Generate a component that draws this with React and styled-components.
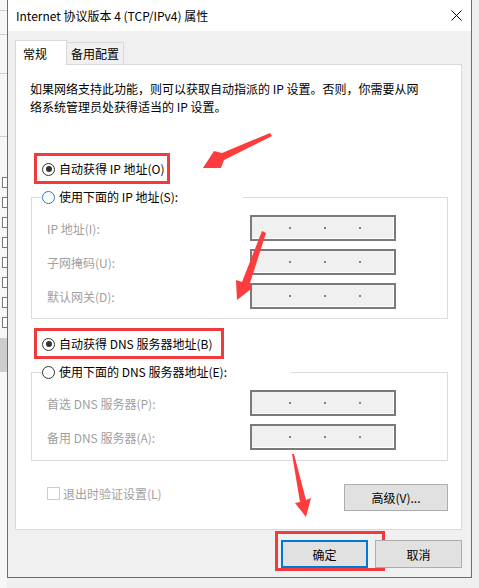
import React from 'react'
import styled, { createGlobalStyle } from 'styled-components'

const GlobalStyle = createGlobalStyle`
    html, body {
        margin: 0;
        padding: 0;
        background: #f0f0f0;
    }
    body {
        font-family: "Noto Sans CJK SC", "Noto Sans", sans-serif;
        font-size: 12px;
        color: #000;
    }
`

const Screen = styled.div`
    position: relative;
    width: 479px;
    height: 588px;
    overflow: hidden;
    display: flex;
    align-items: flex-start;
    background: #efefef;
`

const LeftStrip = styled.div`
    width: 7px;
    height: 588px;
    background: #f7f7f7;
    display: flex;
    flex-direction: column;
    align-items: flex-end;
    .line {
        width: 7px;
        height: 1px;
        background: #d0d0d0;
    }
    .tick {
        width: 4px;
        height: 9px;
        border: 1px solid #777;
        border-right: none;
        background: #fff;
        margin-top: 9px;
    }
    .block {
        width: 7px;
        height: 34px;
        background: #cdcdcd;
        margin-top: 10px;
    }
`

const Dialog = styled.div`
    width: 465px;
    box-sizing: border-box;
    border: 1px solid #1883d7;
    border-top: none;
    background: #f0f0f0;
    display: flex;
    flex-direction: column;
`

const TitleBar = styled.div`
    height: 31px;
    background: #fff;
    display: flex;
    align-items: center;
    justify-content: space-between;
    padding: 0 9px 0 8px;
    font-size: 12px;
`

const Body = styled.div`
    padding: 9px 9px 9px 7px;
    display: flex;
    flex-direction: column;
`

const TabBar = styled.div`
    display: flex;
    align-items: flex-end;
    margin-bottom: -1px;
    position: relative;
    z-index: 1;
`

const Tab = styled.div`
    box-sizing: border-box;
    display: flex;
    align-items: center;
    border: 1px solid #d9d9d9;
    border-bottom: none;
    height: ${p => (p.$active ? '25px' : '22px')};
    width: ${p => p.$w}px;
    padding-left: ${p => (p.$active ? '7px' : '4px')};
    margin-bottom: ${p => (p.$active ? '0' : '1px')};
    background: ${p => (p.$active ? '#fff' : '#f0f0f0')};
    border-left: ${p => (p.$active ? '1px solid #d9d9d9' : 'none')};
`

const Panel = styled.div`
    background: #fff;
    border: 1px solid #d9d9d9;
    padding: 0 13px 18px 0;
    display: flex;
    flex-direction: column;
`

const Desc = styled.p`
    margin: 15px 0 0 14px;
    line-height: 18px;
`

const RadioRow = styled.label`
    position: relative;
    display: inline-flex;
    align-items: center;
    gap: 4px;
    height: 18px;
    line-height: 18px;
    margin: ${p => p.$mt || 0}px 0 0 26px;
    align-self: flex-start;
    &::after {
        content: '';
        display: ${p => (p.$marked ? 'block' : 'none')};
        position: absolute;
        left: -8px;
        right: -${p => p.$markRight || 5}px;
        top: -7px;
        bottom: -6px;
        border: 3px solid #f13a3c;
    }
`

const Circle = styled.span`
    box-sizing: border-box;
    width: 13px;
    height: 13px;
    border-radius: 50%;
    border: 1px solid ${p => (p.$focus ? '#1a7fd4' : '#333')};
    background: #fff;
    display: flex;
    align-items: center;
    justify-content: center;
    &::before {
        content: '';
        display: ${p => (p.$checked ? 'block' : 'none')};
        width: 6px;
        height: 6px;
        border-radius: 50%;
        background: #333;
    }
`

const Group = styled.fieldset`
    margin: 10px 0 0 15px;
    padding: 9px 0 ${p => p.$pb || 9}px 0;
    border: 1px solid #dcdcdc;
    min-width: 0;
    display: grid;
    grid-template-columns: 218px 146px;
    row-gap: 8px;
    align-items: center;
`

const Legend = styled.legend`
    margin-left: 10px;
    padding: 0;
    width: ${p => p.$w}px;
    height: 18px;
`

const FieldLabel = styled.span`
    color: #a0a0a0;
    padding-left: 15px;
`

const IpBox = styled.div`
    box-sizing: border-box;
    height: 26px;
    border: 2px solid #7a7a7a;
    box-shadow: inset -1px -1px 0 #fff;
    background: #f0f0f0;
    display: flex;
    align-items: center;
    padding-left: 4px;
    span {
        width: 33px;
    }
    i {
        width: 2px;
        height: 2px;
        background: #7b7f9a;
    }
`

const Footer = styled.div`
    display: flex;
    justify-content: space-between;
    align-items: flex-start;
    margin: 23px 0 0 31px;
`

const CheckRow = styled.label`
    display: flex;
    align-items: center;
    gap: 3px;
    height: 18px;
    color: #a0a0a0;
`

const Box = styled.span`
    box-sizing: border-box;
    width: 13px;
    height: 13px;
    border: 1px solid #cccccc;
    background: #fff;
`

const Button = styled.button`
    box-sizing: border-box;
    font: inherit;
    color: #000;
    width: ${p => p.$w}px;
    height: ${p => p.$h}px;
    background: #e1e1e1;
    border: ${p => (p.$default ? '2px solid #0078d7' : '1px solid #adadad')};
    padding: 0;
    display: flex;
    align-items: center;
    justify-content: center;
    position: relative;
`

const Actions = styled.div`
    display: flex;
    justify-content: flex-end;
    gap: 7px;
    margin-top: 10px;
`

const Marked = styled.div`
    position: relative;
    &::after {
        content: '';
        position: absolute;
        left: -6px;
        right: -17px;
        top: -9px;
        bottom: -3px;
        border: 3px solid #f13a3c;
    }
`

const Arrows = styled.svg`
    position: absolute;
    left: 0;
    top: 0;
    pointer-events: none;
`

const Ip = () => (
    <IpBox>
        <span /><i /><span /><i /><span /><i />
    </IpBox>
)

export default function App() {
    return (
        <Screen>
            <GlobalStyle />
            <LeftStrip>
                <div className="line" style={{ marginTop: 10 }} />
                <div className="line" style={{ marginTop: 23 }} />
                <div className="line" style={{ marginTop: 38 }} />
                <div className="line" style={{ marginTop: 62 }} />
                <div style={{ height: 31 }} />
                {[0, 1, 2, 3, 4, 5, 6, 7].map(n => <div key={n} className="tick" />)}
                <div className="block" />
            </LeftStrip>
            <Dialog>
                <TitleBar>
                    <span>Internet 协议版本 4 (TCP/IPv4) 属性</span>
                    <svg width="11" height="11" viewBox="0 0 11 11">
                        <path d="M0.5 0.5 L10.5 10.5 M10.5 0.5 L0.5 10.5" stroke="#000" strokeWidth="1" />
                    </svg>
                </TitleBar>
                <Body>
                    <TabBar>
                        <Tab $active $w={52}>常规</Tab>
                        <Tab $w={57}>备用配置</Tab>
                    </TabBar>
                    <Panel>
                        <Desc>
                            如果网络支持此功能，则可以获取自动指派的 IP 设置。否则，你需要从网<br />
                            络系统管理员处获得适当的 IP 设置。
                        </Desc>
                        <RadioRow $mt={44} $marked $markRight={5}>
                            <Circle $checked />自动获得 IP 地址(O)
                        </RadioRow>
                        <Group>
                            <Legend $w={201}>
                                <RadioRow style={{ margin: 0 }}>
                                    <Circle $focus />使用下面的 IP 地址(S):
                                </RadioRow>
                            </Legend>
                            <FieldLabel>IP 地址(I):</FieldLabel>
                            <Ip />
                            <FieldLabel>子网掩码(U):</FieldLabel>
                            <Ip />
                            <FieldLabel>默认网关(D):</FieldLabel>
                            <Ip />
                        </Group>
                        <RadioRow $mt={16} $marked $markRight={12}>
                            <Circle $checked />自动获得 DNS 服务器地址(B)
                        </RadioRow>
                        <Group $pb={10}>
                            <Legend $w={248}>
                                <RadioRow style={{ margin: 0 }}>
                                    <Circle />使用下面的 DNS 服务器地址(E):
                                </RadioRow>
                            </Legend>
                            <FieldLabel>首选 DNS 服务器(P):</FieldLabel>
                            <Ip />
                            <FieldLabel>备用 DNS 服务器(A):</FieldLabel>
                            <Ip />
                        </Group>
                        <Footer>
                            <CheckRow>
                                <Box />退出时验证设置(L)
                            </CheckRow>
                            <Button $w={104} $h={27}>高级(V)...</Button>
                        </Footer>
                    </Panel>
                    <Actions>
                        <Marked>
                            <Button $w={87} $h={28} $default>确定</Button>
                        </Marked>
                        <Button $w={87} $h={28}>取消</Button>
                    </Actions>
                </Body>
            </Dialog>
            <Arrows width="479" height="588" viewBox="0 0 479 588">
                <g fill="#fe3b3d">
                    <polygon points="270,133 272,136 224,160 221,168 203,168 214,151 222,153" />
                    <polygon points="262,231 266,233 250,283 251,289 237,300 236,280 242,282" />
                    <polygon points="292,454 294,454 306,500 311,498 306,517 295,503 300,502" />
                </g>
            </Arrows>
        </Screen>
    )
}
